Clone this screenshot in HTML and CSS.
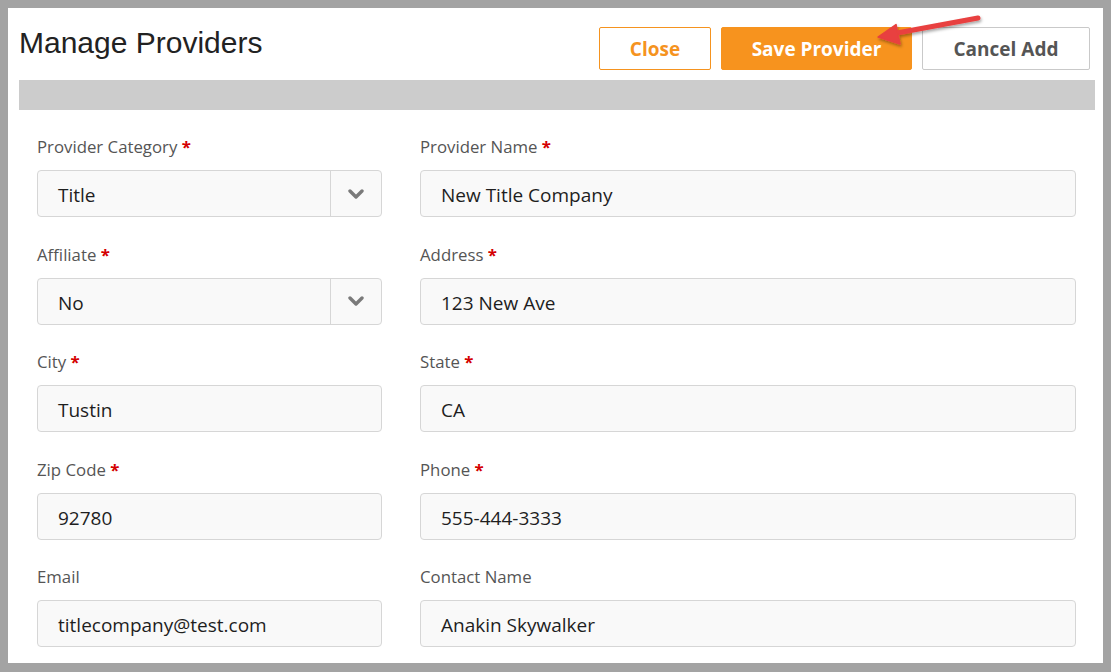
FILE: index.html
```html
<!DOCTYPE html>
<html lang="en">
<head>
<meta charset="utf-8">
<title>Manage Providers</title>
<link rel="stylesheet" href="styles.css">
</head>
<body>
<div class="frame">
  <div class="panel">
    <header class="header">
      <h1 class="title">Manage Providers</h1>
      <div class="actions">
        <button class="btn btn-outline">Close</button>
        <button class="btn btn-primary">Save Provider</button>
        <button class="btn btn-default">Cancel Add</button>
      </div>
    </header>
    <div class="bar"></div>
    <form class="form">
      <div class="field">
        <label class="label">Provider Category <span class="req">*</span></label>
        <div class="input select"><span class="value">Title</span><span class="caret"><svg width="16" height="10" viewBox="0 0 16 10"><path d="M2 2 L8 8 L14 2" fill="none" stroke="#7a7a7a" stroke-width="3.4" stroke-linecap="round" stroke-linejoin="round"/></svg></span></div>
      </div>
      <div class="field">
        <label class="label">Provider Name <span class="req">*</span></label>
        <div class="input"><span class="value">New Title Company</span></div>
      </div>
      <div class="field">
        <label class="label">Affiliate <span class="req">*</span></label>
        <div class="input select"><span class="value">No</span><span class="caret"><svg width="16" height="10" viewBox="0 0 16 10"><path d="M2 2 L8 8 L14 2" fill="none" stroke="#7a7a7a" stroke-width="3.4" stroke-linecap="round" stroke-linejoin="round"/></svg></span></div>
      </div>
      <div class="field">
        <label class="label">Address <span class="req">*</span></label>
        <div class="input"><span class="value">123 New Ave</span></div>
      </div>
      <div class="field">
        <label class="label">City <span class="req">*</span></label>
        <div class="input"><span class="value">Tustin</span></div>
      </div>
      <div class="field">
        <label class="label">State <span class="req">*</span></label>
        <div class="input"><span class="value">CA</span></div>
      </div>
      <div class="field">
        <label class="label">Zip Code <span class="req">*</span></label>
        <div class="input"><span class="value">92780</span></div>
      </div>
      <div class="field">
        <label class="label">Phone <span class="req">*</span></label>
        <div class="input"><span class="value">555-444-3333</span></div>
      </div>
      <div class="field">
        <label class="label">Email</label>
        <div class="input"><span class="value">titlecompany@test.com</span></div>
      </div>
      <div class="field">
        <label class="label">Contact Name</label>
        <div class="input"><span class="value">Anakin Skywalker</span></div>
      </div>
    </form>
  </div>
  <svg class="arrow" width="140" height="50" viewBox="0 0 140 50">
    <defs>
      <filter id="sh" x="-20%" y="-50%" width="140%" height="200%">
        <feDropShadow dx="1" dy="2" stdDeviation="1.5" flood-color="#000" flood-opacity="0.35"/>
      </filter>
    </defs>
    <g filter="url(#sh)" fill="#e8413f" stroke="#e8413f">
      <line x1="36" y1="30" x2="117" y2="15" stroke-width="5" stroke-linecap="round"/>
      <polygon points="17,34 35,21.5 39,41" stroke-width="1.5" stroke-linejoin="round"/>
    </g>
  </svg>
</div>
</body>
</html>
```

FILE: styles.css
```css
* { box-sizing: border-box; }
html, body { margin: 0; padding: 0; }
body {
  background: #a3a3a3;
  width: 1111px;
  height: 672px;
  overflow: hidden;
  font-family: "Open Sans", "Noto Sans", sans-serif;
}
.frame {
  position: relative;
  padding: 8px 8px 9px 8px;
  height: 672px;
}
.panel {
  background: #fff;
  height: 655px;
}
.header {
  display: flex;
  justify-content: space-between;
  align-items: flex-start;
  padding: 19px 13px 0 11px;
  height: 72px;
}
.title {
  margin: 1px 0 0 0;
  font-family: "Liberation Sans", Arial, sans-serif;
  font-weight: normal;
  font-size: 30px;
  line-height: 30px;
  color: #222;
}
.actions {
  display: flex;
  gap: 10px;
}
.btn {
  height: 43px;
  border-radius: 2px;
  font-family: "Open Sans", "Noto Sans", sans-serif;
  font-weight: 700;
  font-size: 19px;
  padding: 0;
  cursor: pointer;
}
.btn-outline {
  width: 112px;
  background: #fff;
  border: 1px solid #f5931f;
  color: #f5931f;
}
.btn-primary {
  width: 191px;
  background: #f7931e;
  border: 1px solid #f7931e;
  color: #fff;
}
.btn-default {
  width: 168px;
  background: #fff;
  border: 1px solid #c9c9c9;
  color: #555;
}
.bar {
  margin: 0 8px 0 11px;
  height: 30px;
  background: #cccccc;
}
.form {
  display: grid;
  grid-template-columns: 345px 656px;
  column-gap: 38px;
  row-gap: 25.5px;
  padding: 25px 0 0 29px;
}
.field {
  display: flex;
  flex-direction: column;
}
.label {
  font-size: 16.8px;
  line-height: 24px;
  height: 24px;
  margin-bottom: 11px;
  color: #555;
}
.req {
  color: #d40000;
  font-weight: 700;
}
.input {
  height: 47px;
  display: flex;
  align-items: center;
  background: #f9f9f9;
  border: 1px solid #d6d6d6;
  border-radius: 4px;
  padding: 3px 0 0 20px;
  font-size: 19px;
  color: #1e1e1e;
}
.input .value { flex: 1; }
.select { padding-right: 0; }
.caret {
  width: 51px;
  align-self: stretch;
  margin-top: -3px;
  border-left: 1px solid #d6d6d6;
  display: flex;
  align-items: center;
  justify-content: center;
}
.arrow {
  position: absolute;
  left: 861px;
  top: 3px;
}
```
